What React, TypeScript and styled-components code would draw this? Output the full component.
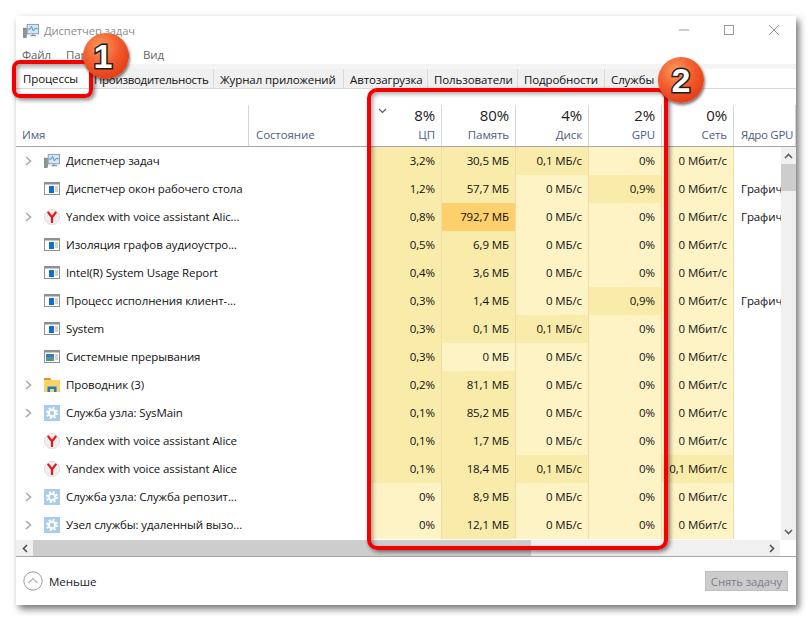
import React from 'react';
import styled, { createGlobalStyle } from 'styled-components';

const GlobalStyle = createGlobalStyle`
html, body {
margin: 0;
padding: 0;
background: #fff;
}
body {
font-family: "Open Sans", "Noto Sans", "Liberation Sans", sans-serif;
}
`;

const Page = styled.div`
width: 812px;
height: 621px;
padding: 16px;
box-sizing: border-box;
position: relative;
overflow: hidden;
`;

const Window = styled.div`
width: 780px;
height: 589px;
background: #fff;
box-shadow: 3px 4px 7px rgba(0, 0, 0, 0.55);
display: flex;
flex-direction: column;
font-size: 11.5px;
color: #111;
letter-spacing: -0.1px;
`;

const TitleBar = styled.div`
height: 30px;
flex: none;
display: flex;
align-items: center;
padding: 0 17px 0 7px;
gap: 5px;
color: #8c8c8c;
`;

const TitleText = styled.span`
flex: 1;
font-size: 11.2px;
padding-bottom: 2px;
`;

const WindowButtons = styled.div`
display: flex;
align-items: center;
gap: 35px;
margin-bottom: 3px;
`;

const MenuBar = styled.div`
height: 18px;
flex: none;
display: flex;
align-items: center;
padding: 0 0 2px 6px;
box-sizing: border-box;
color: #666;
`;

const MenuItem = styled.span<{ $width: number }>`
width: ${props => props.$width}px;
`;

const TabStrip = styled.div`
height: 25px;
flex: none;
box-sizing: border-box;
border-top: 5px solid #f4f4f4;
border-bottom: 1px solid #d9d9d9;
display: flex;
`;

const Tab = styled.div<{ $width: number; $active?: boolean }>`
width: ${props => props.$width}px;
box-sizing: border-box;
background: ${props => props.$active ? "#fff" : "#f0f0f0"};
border-right: 1px solid #d9d9d9;
display: flex;
align-items: center;
padding: ${props => props.$active ? "0 0 0 7px" : "2px 0 0 6px"};
color: #111;
white-space: nowrap;
`;

const ProductivityLabel = styled.span`
margin-left: -4px;
letter-spacing: -0.3px;
`;

const HeaderRow = styled.div`
margin-top: 16px;
height: 42px;
flex: none;
display: flex;
box-sizing: border-box;
border-bottom: 1px solid #a6a6a6;
`;

const HeaderCell = styled.div<{ $width: number; $left?: boolean; $pad?: number }>`
width: ${props => props.$width}px;
flex: none;
box-sizing: border-box;
border-right: 1px solid #d4d4d4;
padding: 0 6px 0 ${props => props.$pad ?? 6}px;
position: relative;
display: flex;
flex-direction: column;
justify-content: flex-end;
align-items: ${props => props.$left ? "flex-start" : "flex-end"};
white-space: nowrap;
`;

const Percent = styled.div`
font-size: 15px;
line-height: 20px;
margin-bottom: 2px;
color: #222;
`;

const ColumnLabel = styled.div<{ $tight?: boolean }>`
line-height: 15px;
padding-bottom: 4px;
color: #4d6082;
letter-spacing: ${props => props.$tight ? "-0.3px" : "-0.1px"};
`;

const SortArrow = styled.svg`
position: absolute;
left: 9px;
top: 3px;
`;

const Body = styled.div`
height: 393px;
flex: none;
display: flex;
`;

const Rows = styled.div`
width: 765px;
flex: none;
`;

const Row = styled.div`
height: 28px;
display: flex;
`;

const NameCell = styled.div`
width: 233px;
flex: none;
display: flex;
align-items: center;
box-sizing: border-box;
white-space: nowrap;
`;

const Expander = styled.div`
width: 28px;
flex: none;
display: flex;
justify-content: center;
padding-right: 4px;
box-sizing: border-box;
`;

const NameText = styled.span`
margin-left: 6px;
padding-bottom: 2px;
`;

const StatusCell = styled.div`
width: 120px;
flex: none;
`;

const HeatCell = styled.div<{ $width: number; $heat: number }>`
width: ${props => props.$width}px;
flex: none;
box-sizing: border-box;
border-right: 1px solid #efdcaa;
padding: 0 6px 2px 0;
background: ${props => props.$heat === 2 ? "#fdcf6d" : props.$heat === 1 ? "#f9ebaa" : "#fdf3c5"};
display: flex;
align-items: center;
justify-content: flex-end;
white-space: nowrap;
`;

const CoreCell = styled.div`
width: 47px;
flex: none;
box-sizing: border-box;
padding: 0 0 2px 7px;
display: flex;
align-items: center;
overflow: hidden;
white-space: nowrap;
`;

const VScroll = styled.div`
width: 15px;
flex: none;
background: #f0f0f0;
display: flex;
flex-direction: column;
`;

const ScrollButton = styled.div`
height: 17px;
flex: none;
display: flex;
align-items: center;
justify-content: center;
`;

const VThumb = styled.div`
height: 27px;
flex: none;
background: #cdcdcd;
`;

const VTrack = styled.div`
flex: 1;
`;

const BottomBar = styled.div`
height: 16px;
flex: none;
display: flex;
`;

const HScroll = styled.div`
width: 764px;
flex: none;
background: #f0f0f0;
display: flex;
`;

const HButton = styled.div`
width: 17px;
flex: none;
display: flex;
align-items: center;
justify-content: center;
`;

const HThumb = styled.div`
width: 498px;
flex: none;
background: #cdcdcd;
`;

const HTrack = styled.div`
flex: 1;
`;

const Footer = styled.div`
flex: 1;
border-top: 1px solid #a6a6a6;
display: flex;
align-items: center;
padding: 0 8px 0 7px;
`;

const LessLabel = styled.span`
margin-left: 6px;
font-size: 11.6px;
color: #1c1c2c;
flex: 1;
`;

const EndTaskButton = styled.div`
width: 83px;
height: 20px;
box-sizing: border-box;
background: #cccccc;
border: 1px solid #bfbfbf;
color: #7d7d8d;
display: flex;
align-items: center;
justify-content: center;
white-space: nowrap;
font-size: 11.3px;
`;

const Highlight = styled.div<{ $x: number; $y: number; $w: number; $h: number; $r: number }>`
position: absolute;
left: ${props => props.$x}px;
top: ${props => props.$y}px;
width: ${props => props.$w}px;
height: ${props => props.$h}px;
box-sizing: border-box;
border: 4px solid #f50000;
border-radius: ${props => props.$r}px;
box-shadow: 2px 2px 4px rgba(0, 0, 0, 0.5), inset 2px 2px 4px rgba(0, 0, 0, 0.35);
`;

const Badge = styled.div<{ $x: number; $y: number; $shift?: number }>`
position: absolute;
left: ${props => props.$x}px;
top: ${props => props.$y}px;
width: 46px;
height: 46px;
box-sizing: border-box;
padding-right: ${props => props.$shift ?? 0}px;
border-radius: 50%;
background: radial-gradient(circle at 38% 30%, #fb9a5e 0%, #f2592a 45%, #d92c0c 100%);
box-shadow: 1px 2px 3px rgba(0, 0, 0, 0.55);
display: flex;
align-items: center;
justify-content: center;
font-family: "Liberation Sans", Arial, sans-serif;
font-weight: 700;
font-size: 34px;
color: #fff;
-webkit-text-stroke: 3px #1c1c1c;
paint-order: stroke fill;
`;

const Chevron = () => (
    <svg width="7" height="10" viewBox="0 0 7 10">
        <path d="M1 1l4.5 4L1 9" fill="none" stroke="#a8a8a8" strokeWidth="1.6" />
    </svg>
);

const TaskIcon = () => (
    <svg width="16" height="16" viewBox="0 0 17 16">
        <rect x="0.5" y="5" width="3" height="10" fill="#8b9499" stroke="#5f6b60" strokeWidth="0.6" />
        <rect x="4.5" y="1" width="12" height="10" fill="#d6e6f3" stroke="#8a98a4" />
        <path d="M5.5 6h2l1.5-3 2 5 1.5-2.5h3" fill="none" stroke="#3f8fd2" strokeWidth="1" />
        <path d="M8 13h6M10.5 11v2" stroke="#8a98a4" strokeWidth="1.4" />
    </svg>
);

const AppIcon = () => (
    <svg width="16" height="14" viewBox="0 0 16 14">
        <rect x="0.5" y="0.5" width="15" height="12" fill="#fff" stroke="#8d9195" />
        <rect x="0" y="0" width="16" height="2.5" fill="#8d9195" />
        <rect x="5" y="4" width="5" height="7" fill="#0f6fd1" />
        <path d="M11 5h3M11 7h3M11 9h3" stroke="#a0a4a8" strokeWidth="1" />
    </svg>
);

const InterruptIcon = () => (
    <svg width="16" height="14" viewBox="0 0 16 14">
        <rect x="0.5" y="0.5" width="15" height="12" fill="#fff" stroke="#8d9195" />
        <rect x="0" y="0" width="16" height="2.5" fill="#8d9195" />
        <rect x="2" y="4" width="8" height="7" fill="#4f9a80" />
        <rect x="2" y="4" width="8" height="3" fill="#3e78b5" />
        <path d="M11 5h3M11 7h3M11 9h3" stroke="#a0a4a8" strokeWidth="1" />
    </svg>
);

const YandexIcon = () => (
    <svg width="16" height="16" viewBox="0 0 16 16">
        <circle cx="8" cy="8" r="7.7" fill="#efefef" stroke="#d2d2d2" strokeWidth="0.6" />
        <path d="M3.8 2.8L8 8.5 12.2 2.8M8 8.5V14" fill="none" stroke="#e5161c" strokeWidth="2.2" />
    </svg>
);

const FolderIcon = () => (
    <svg width="16" height="16" viewBox="0 0 16 16">
        <path d="M0 1h6l1.5 2H0z" fill="#d99a1e" />
        <rect x="0" y="3" width="16" height="12" fill="#fbd365" />
        <path d="M3.5 15V9.5h9V15H10v-3H6v3z" fill="#1d7ad2" />
    </svg>
);

const GearIcon = () => (
    <svg width="16" height="16" viewBox="0 0 16 16">
        <rect width="16" height="16" fill="#a9cbec" />
        <circle cx="8" cy="8" r="3.3" fill="none" stroke="#fff" strokeWidth="2" />
        <circle cx="8" cy="8" r="5" fill="none" stroke="#fff" strokeWidth="2" strokeDasharray="2 1.93" />
    </svg>
);

const icons = {
    task: <TaskIcon />,
    app: <AppIcon />,
    interrupt: <InterruptIcon />,
    yandex: <YandexIcon />,
    folder: <FolderIcon />,
    gear: <GearIcon />,
};

const tabs = [
    { label: "Процессы", width: 76, active: true },
    { label: "Производительность", width: 122 },
    { label: "Журнал приложений", width: 130 },
    { label: "Автозагрузка", width: 84 },
    { label: "Пользователи", width: 90 },
    { label: "Подробности", width: 87 },
    { label: "Службы", width: 59 },
];

const columns = [
    { percent: "8%", label: "ЦП", width: 73, sorted: true },
    { percent: "80%", label: "Память", width: 74 },
    { percent: "4%", label: "Диск", width: 73 },
    { percent: "2%", label: "GPU", width: 73 },
    { percent: "0%", label: "Сеть", width: 72 },
];

type Process = {
    name: string;
    icon: keyof typeof icons;
    expand?: boolean;
    values: string[];
    heat: number[];
    core?: string;
};

const processes: Process[] = [
    { name: "Диспетчер задач", icon: "task", expand: true, values: ["3,2%", "30,5 МБ", "0,1 МБ/с", "0%", "0 Мбит/с"], heat: [1, 1, 1, 0, 0] },
    { name: "Диспетчер окон рабочего стола", icon: "app", values: ["1,2%", "57,7 МБ", "0 МБ/с", "0,9%", "0 Мбит/с"], heat: [1, 1, 0, 1, 0], core: "Графич" },
    { name: "Yandex with voice assistant Alic...", icon: "yandex", expand: true, values: ["0,8%", "792,7 МБ", "0 МБ/с", "0%", "0 Мбит/с"], heat: [1, 2, 0, 0, 0], core: "Графич" },
    { name: "Изоляция графов аудиоустро...", icon: "app", values: ["0,5%", "6,9 МБ", "0 МБ/с", "0%", "0 Мбит/с"], heat: [1, 1, 0, 0, 0] },
    { name: "Intel(R) System Usage Report", icon: "app", values: ["0,4%", "3,6 МБ", "0 МБ/с", "0%", "0 Мбит/с"], heat: [1, 1, 0, 0, 0] },
    { name: "Процесс исполнения клиент-...", icon: "app", values: ["0,3%", "1,4 МБ", "0 МБ/с", "0,9%", "0 Мбит/с"], heat: [1, 1, 0, 1, 0], core: "Графич" },
    { name: "System", icon: "app", values: ["0,3%", "0,1 МБ", "0,1 МБ/с", "0%", "0 Мбит/с"], heat: [1, 1, 1, 0, 0] },
    { name: "Системные прерывания", icon: "interrupt", values: ["0,3%", "0 МБ", "0 МБ/с", "0%", "0 Мбит/с"], heat: [1, 0, 0, 0, 0] },
    { name: "Проводник (3)", icon: "folder", expand: true, values: ["0,2%", "81,1 МБ", "0 МБ/с", "0%", "0 Мбит/с"], heat: [1, 1, 0, 0, 0] },
    { name: "Служба узла: SysMain", icon: "gear", expand: true, values: ["0,1%", "85,2 МБ", "0 МБ/с", "0%", "0 Мбит/с"], heat: [1, 1, 0, 0, 0] },
    { name: "Yandex with voice assistant Alice", icon: "yandex", values: ["0,1%", "1,7 МБ", "0 МБ/с", "0%", "0 Мбит/с"], heat: [1, 1, 0, 0, 0] },
    { name: "Yandex with voice assistant Alice", icon: "yandex", values: ["0,1%", "18,4 МБ", "0,1 МБ/с", "0%", "0,1 Мбит/с"], heat: [1, 1, 1, 0, 1] },
    { name: "Служба узла: Служба репозит...", icon: "gear", expand: true, values: ["0%", "8,9 МБ", "0 МБ/с", "0%", "0 Мбит/с"], heat: [0, 1, 0, 0, 0] },
    { name: "Узел службы: удаленный вызо...", icon: "gear", expand: true, values: ["0%", "12,1 МБ", "0 МБ/с", "0%", "0 Мбит/с"], heat: [0, 1, 0, 0, 0] },
];

export default function App() {
    return (
        <Page>
            <GlobalStyle />
            <Window>
                <TitleBar>
                    <TaskIcon />
                    <TitleText>Диспетчер задач</TitleText>
                    <WindowButtons>
                        <svg width="10" height="10" viewBox="0 0 10 10"><path d="M0 5h10" stroke="#999" /></svg>
                        <svg width="10" height="10" viewBox="0 0 10 10"><rect x="0.5" y="0.5" width="9" height="9" fill="none" stroke="#999" /></svg>
                        <svg width="10" height="10" viewBox="0 0 10 10"><path d="M0 0l10 10M10 0L0 10" stroke="#999" /></svg>
                    </WindowButtons>
                </TitleBar>
                <MenuBar>
                    <MenuItem $width={44}>Файл</MenuItem>
                    <MenuItem $width={77}>Параметры</MenuItem>
                    <MenuItem $width={30}>Вид</MenuItem>
                </MenuBar>
                <TabStrip>
                    {tabs.map(tab => (
                        <Tab key={tab.label} $width={tab.width} $active={tab.active}>
                            {tab.label === "Производительность" ? <ProductivityLabel>{tab.label}</ProductivityLabel> : tab.label}
                        </Tab>
                    ))}
                </TabStrip>
                <HeaderRow>
                    <HeaderCell $width={233} $left>
                        <ColumnLabel>Имя</ColumnLabel>
                    </HeaderCell>
                    <HeaderCell $width={120} $left $pad={7}>
                        <ColumnLabel>Состояние</ColumnLabel>
                    </HeaderCell>
                    {columns.map(col => (
                        <HeaderCell key={col.label} $width={col.width}>
                            {col.sorted && (
                                <SortArrow width="9" height="6" viewBox="0 0 9 6">
                                    <path d="M1 1l3.5 3.5L8 1" fill="none" stroke="#4d6082" strokeWidth="1.2" />
                                </SortArrow>
                            )}
                            <Percent>{col.percent}</Percent>
                            <ColumnLabel>{col.label}</ColumnLabel>
                        </HeaderCell>
                    ))}
                    <HeaderCell $width={62} $left $pad={7}>
                        <ColumnLabel $tight>Ядро GPU</ColumnLabel>
                    </HeaderCell>
                </HeaderRow>
                <Body>
                    <Rows>
                        {processes.map((p, i) => (
                            <Row key={i}>
                                <NameCell>
                                    <Expander>{p.expand && <Chevron />}</Expander>
                                    {icons[p.icon]}
                                    <NameText>{p.name}</NameText>
                                </NameCell>
                                <StatusCell />
                                {p.values.map((value, c) => (
                                    <HeatCell key={c} $width={columns[c].width} $heat={p.heat[c]}>{value}</HeatCell>
                                ))}
                                <CoreCell>{p.core}</CoreCell>
                            </Row>
                        ))}
                    </Rows>
                    <VScroll>
                        <ScrollButton>
                            <svg width="9" height="6" viewBox="0 0 9 6"><path d="M1 5l3.5-3.5L8 5" fill="none" stroke="#606060" strokeWidth="1.6" /></svg>
                        </ScrollButton>
                        <VThumb />
                        <VTrack />
                        <ScrollButton>
                            <svg width="9" height="6" viewBox="0 0 9 6"><path d="M1 1l3.5 3.5L8 1" fill="none" stroke="#606060" strokeWidth="1.6" /></svg>
                        </ScrollButton>
                    </VScroll>
                </Body>
                <BottomBar>
                    <HScroll>
                        <HButton>
                            <svg width="6" height="9" viewBox="0 0 6 9"><path d="M5 1L1.5 4.5 5 8" fill="none" stroke="#505050" strokeWidth="1.6" /></svg>
                        </HButton>
                        <HThumb />
                        <HTrack />
                        <HButton>
                            <svg width="6" height="9" viewBox="0 0 6 9"><path d="M1 1l3.5 3.5L1 8" fill="none" stroke="#505050" strokeWidth="1.6" /></svg>
                        </HButton>
                    </HScroll>
                </BottomBar>
                <Footer>
                    <svg width="20" height="20" viewBox="0 0 20 20">
                        <circle cx="10" cy="10" r="9.2" fill="#fff" stroke="#9a9a9a" />
                        <path d="M5.5 12L10 7.5l4.5 4.5" fill="none" stroke="#b0b0b0" strokeWidth="1.2" />
                    </svg>
                    <LessLabel>Меньше</LessLabel>
                    <EndTaskButton>Снять задачу</EndTaskButton>
                </Footer>
            </Window>
            <Highlight $x={12} $y={60} $w={81} $h={38} $r={8} />
            <Highlight $x={367} $y={88} $w={301} $h={462} $r={10} />
            <Badge $x={83} $y={33} $shift={6}>1</Badge>
            <Badge $x={658} $y={57}>2</Badge>
        </Page>
    );
}
